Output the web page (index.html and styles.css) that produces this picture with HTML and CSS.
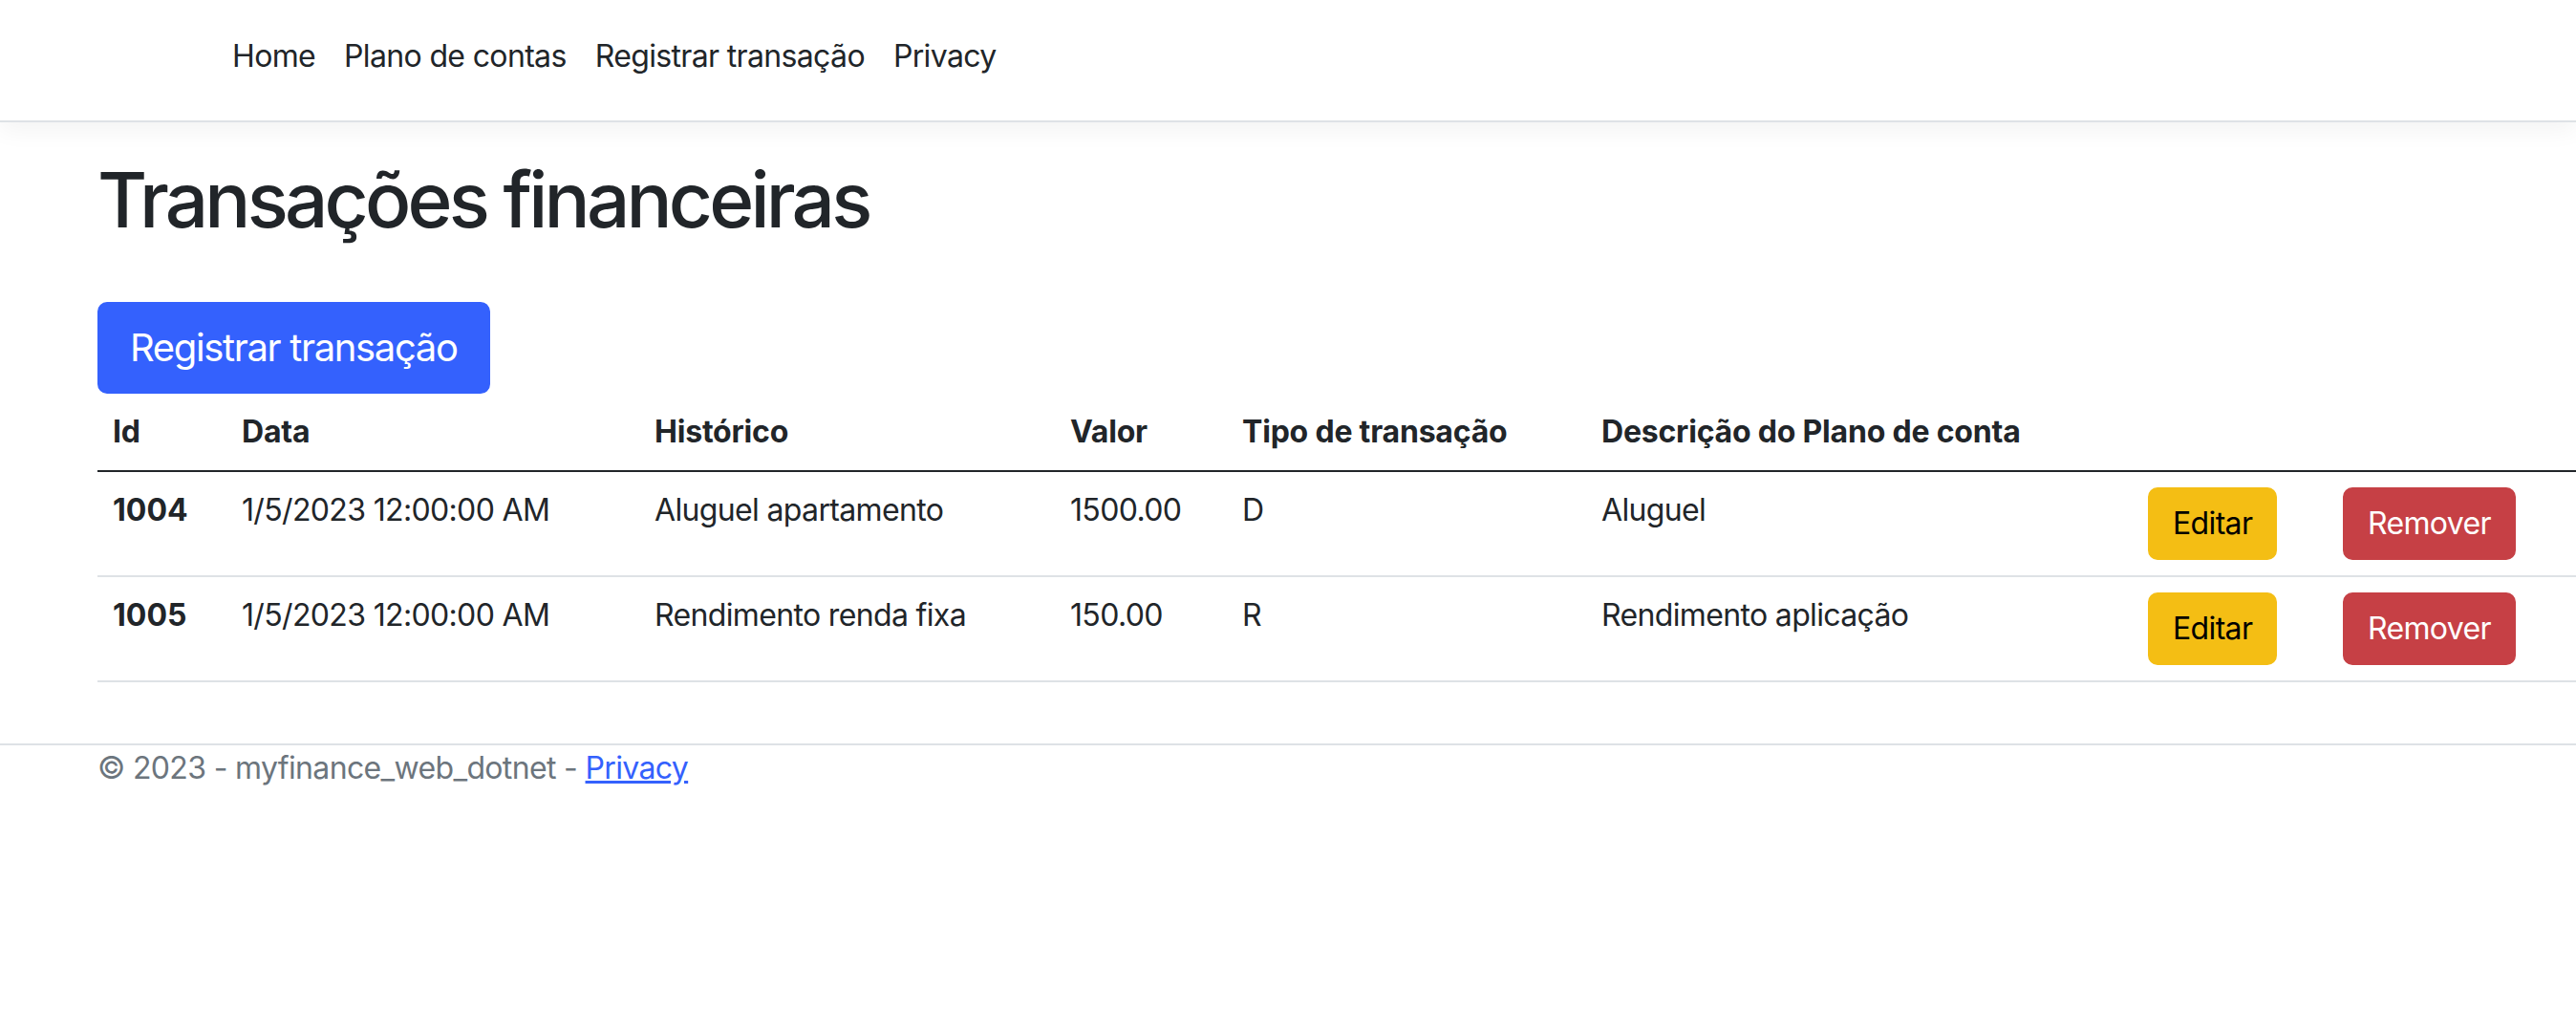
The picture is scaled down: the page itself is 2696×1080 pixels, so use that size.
FILE: index.html
```html
<!DOCTYPE html>
<html lang="pt-BR">
<head>
<meta charset="utf-8">
<title>Transações financeiras - myfinance_web_dotnet</title>
<link rel="stylesheet" href="styles.css">
</head>
<body>
<header class="topbar">
  <nav class="nav">
    <a class="nav-link" href="#">Home</a>
    <a class="nav-link" href="#">Plano de contas</a>
    <a class="nav-link" href="#">Registrar transação</a>
    <a class="nav-link" href="#">Privacy</a>
  </nav>
</header>
<main class="main">
  <h1 class="title">Transações financeiras</h1>
  <a class="btn btn-primary btn-lg" href="#">Registrar transação</a>
  <table class="table">
    <colgroup>
      <col class="c-id"><col class="c-data"><col class="c-hist"><col class="c-valor"><col class="c-tipo"><col class="c-desc"><col class="c-edit"><col class="c-rem">
    </colgroup>
    <thead>
      <tr>
        <th>Id</th>
        <th>Data</th>
        <th>Histórico</th>
        <th>Valor</th>
        <th>Tipo de transação</th>
        <th>Descrição do Plano de conta</th>
        <th></th>
        <th></th>
      </tr>
    </thead>
    <tbody>
      <tr>
        <th class="rowhead">1004</th>
        <td>1/5/2023 12:00:00 AM</td>
        <td>Aluguel apartamento</td>
        <td>1500.00</td>
        <td>D</td>
        <td>Aluguel</td>
        <td><a class="btn btn-warning" href="#">Editar</a></td>
        <td><a class="btn btn-danger" href="#">Remover</a></td>
      </tr>
      <tr>
        <th class="rowhead">1005</th>
        <td>1/5/2023 12:00:00 AM</td>
        <td>Rendimento renda fixa</td>
        <td>150.00</td>
        <td>R</td>
        <td>Rendimento aplicação</td>
        <td><a class="btn btn-warning" href="#">Editar</a></td>
        <td><a class="btn btn-danger" href="#">Remover</a></td>
      </tr>
    </tbody>
  </table>
</main>
<footer class="footer">
  <div class="footer-inner">© 2023 - myfinance_web_dotnet - <a class="footer-link" href="#">Privacy</a></div>
</footer>
</body>
</html>
```

FILE: styles.css
```css
html, body {
  margin: 0;
  padding: 0;
  background: #ffffff;
}

body {
  font-family: Inter, "Noto Sans", "Liberation Sans", sans-serif;
  font-size: 32px;
  line-height: 48px;
  letter-spacing: -0.65px;
  color: #212529;
  overflow-x: hidden;
}

.topbar {
  border-bottom: 2px solid #dee2e6;
  box-shadow: 0 8px 24px rgba(0, 0, 0, 0.05);
  height: 126px;
}

.nav {
  display: flex;
  padding: 35px 0 0 228px;
}

.nav-link {
  color: #212529;
  text-decoration: none;
  padding: 0 15px;
  line-height: 48px;
}

.main {
  padding-left: 102px;
}

.title {
  margin: 33px 0 59px 0;
  font-size: 80px;
  font-weight: 500;
  line-height: 96px;
  letter-spacing: -3.8px;
}

.btn {
  display: inline-block;
  border: 2px solid transparent;
  border-radius: 10px;
  text-decoration: none;
  font-size: 32px;
  line-height: 48px;
  padding: 12px 24px;
  font-weight: 400;
}

.btn-lg {
  font-size: 40px;
  line-height: 60px;
  padding: 16px 32px;
  border-radius: 10px;
  letter-spacing: -1.35px;
}

.btn-primary {
  background: #3461fd;
  border-color: #3461fd;
  color: #ffffff;
}

.btn-warning {
  background: #f4be14;
  border-color: #f4be14;
  color: #000000;
}

.btn-danger {
  background: #c64045;
  border-color: #c64045;
  color: #ffffff;
}

.table {
  border-collapse: collapse;
  table-layout: fixed;
  width: 2594px;
}

.c-id { width: 135px; }
.c-data { width: 432px; }
.c-hist { width: 435px; }
.c-valor { width: 180px; }
.c-tipo { width: 376px; }
.c-desc { width: 572px; }
.c-edit { width: 204px; }
.c-rem { width: 260px; }

.table th,
.table td {
  padding: 16px;
  text-align: left;
  vertical-align: top;
  white-space: nowrap;
}

.table thead th {
  font-weight: 700;
  letter-spacing: -0.2px;
  border-bottom: 2px solid #212529;
}

.table tbody th,
.table tbody td {
  border-bottom: 2px solid #dee2e6;
}

.table .rowhead {
  font-weight: 700;
  letter-spacing: 0;
}

.footer {
  margin-top: 64px;
  border-top: 2px solid #dee2e6;
  color: #6c757d;
}

.footer-inner {
  padding-left: 102px;
  line-height: 48px;
  white-space: nowrap;
}

.footer-link {
  color: #3461fd;
  text-decoration: underline;
}
```
